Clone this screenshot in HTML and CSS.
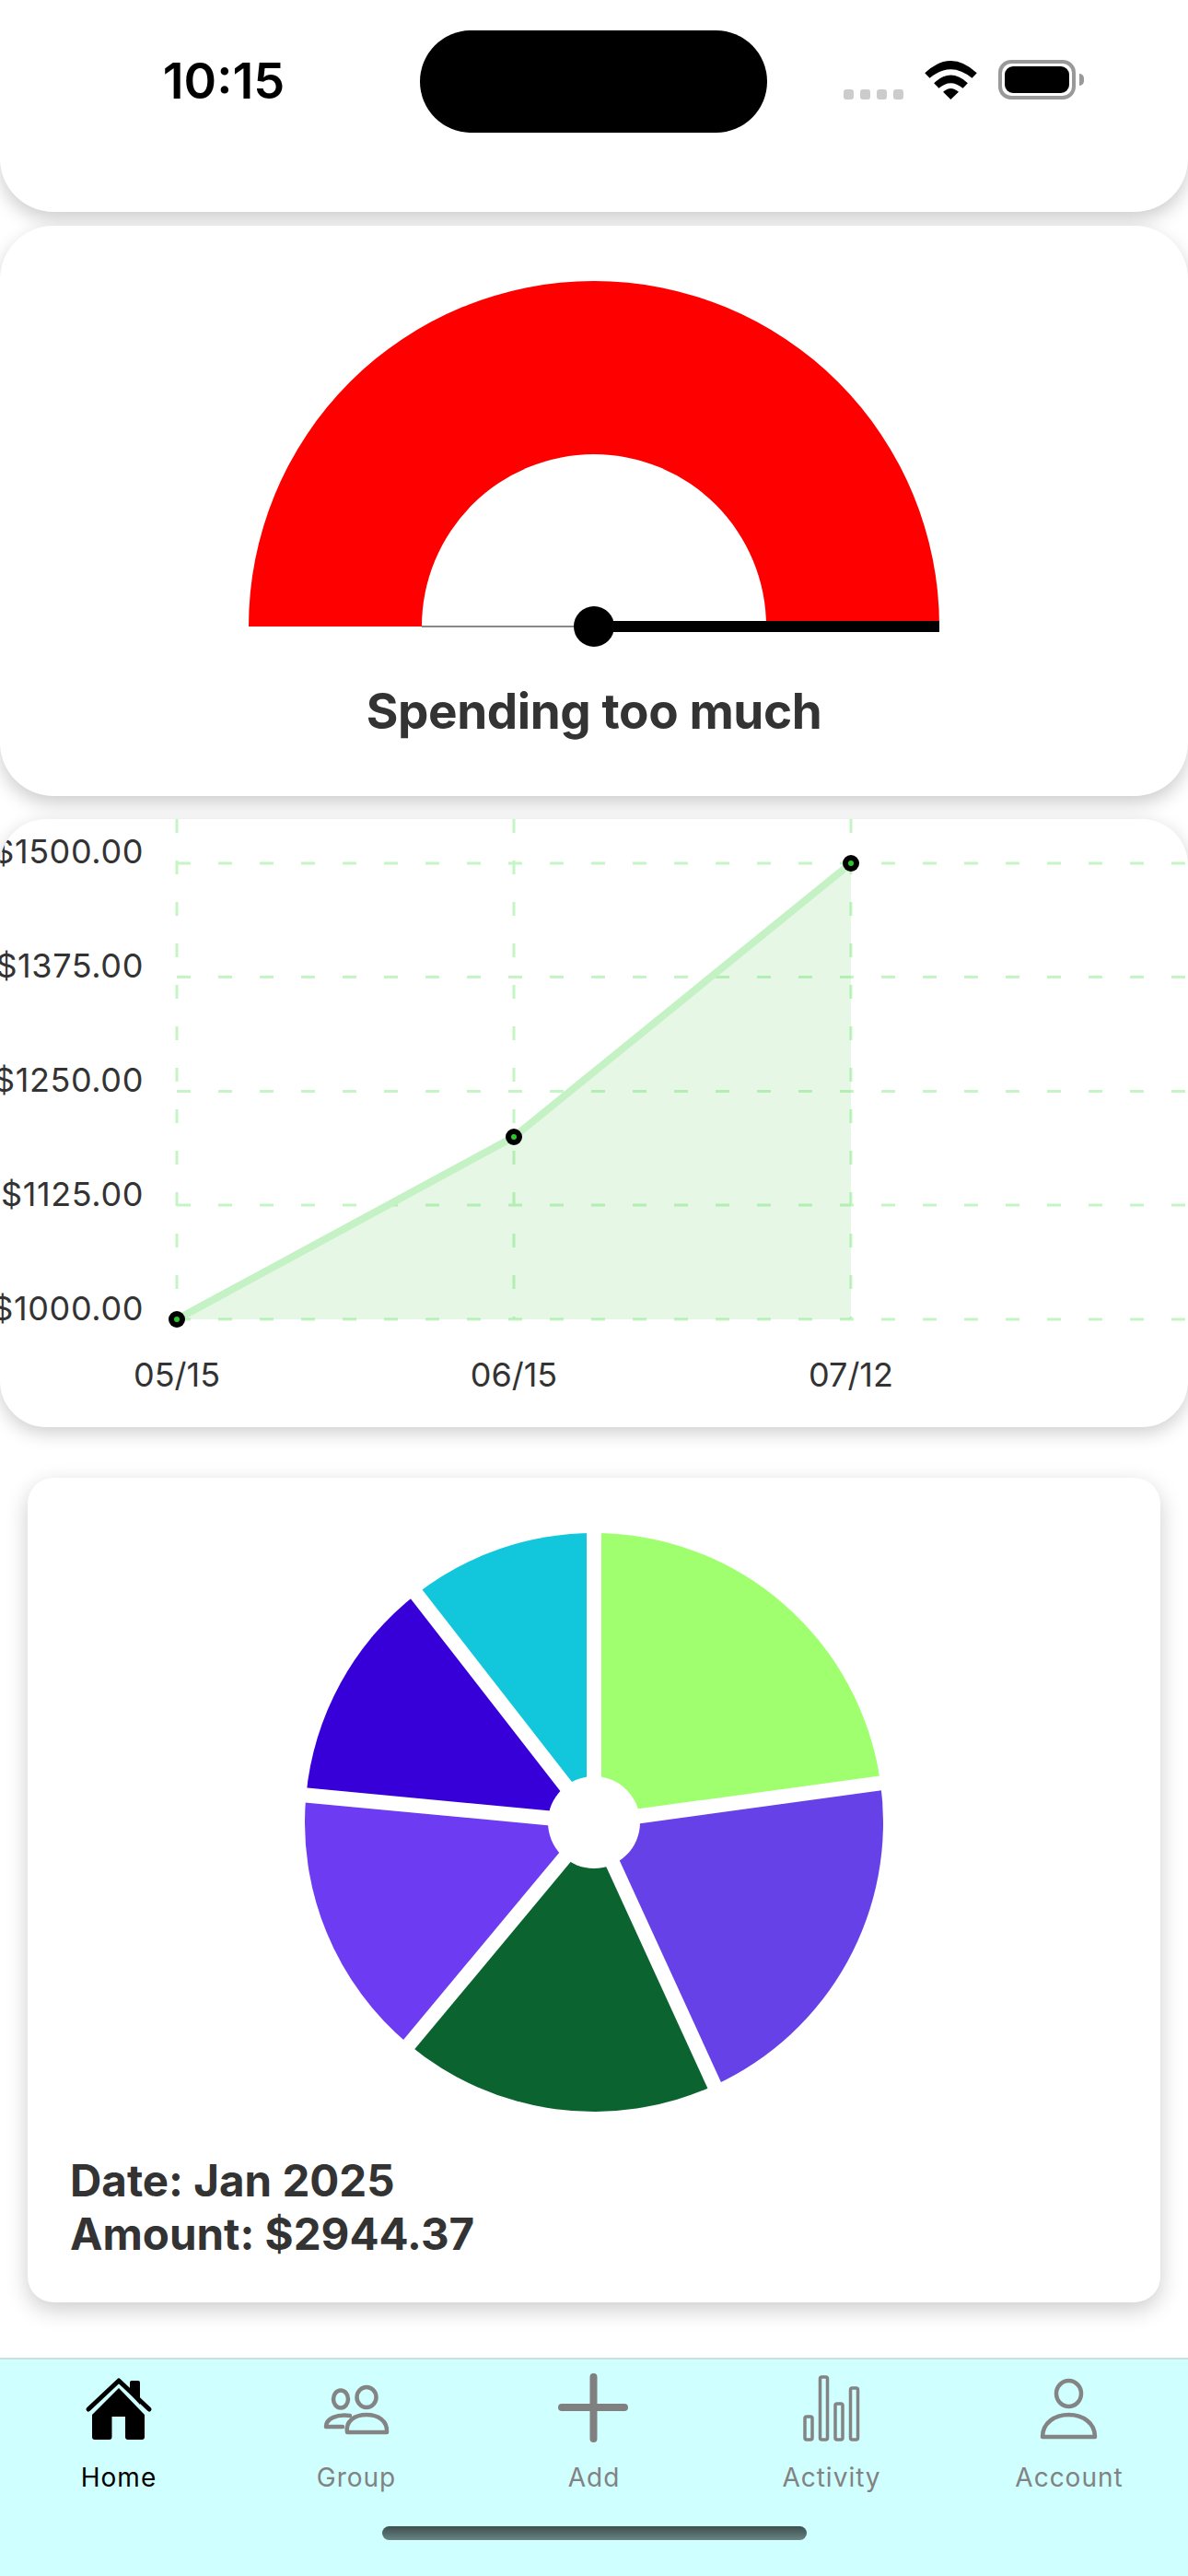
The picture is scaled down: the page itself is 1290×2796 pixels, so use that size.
FILE: index.html
```html
<!DOCTYPE html>
<html lang="en">
<head>
<meta charset="utf-8">
<title>Spending overview</title>
<link rel="stylesheet" href="styles.css">
</head>
<body>
<div class="page">
  <header class="top-card">
    <div class="status-bar">
      <div class="time">10:15</div>
      <div class="island"></div>
      <div class="status-icons">
        <div class="signal"><i></i><i></i><i></i><i></i></div>
        <svg class="wifi" viewBox="372 105 171 127" width="57" height="42">
          <path d="M372 145Q457 65 543 145L527 162Q457 104 388 162Z"/>
          <path d="M402 178Q457 126 513 178L497 195Q457 161 418 195Z"/>
          <path d="M432 207Q457 184 483 207L457 232Z"/>
        </svg>
        <div class="battery"><div class="battery-fill"></div></div>
        <div class="battery-cap"></div>
      </div>
    </div>
  </header>

  <section class="gauge-card">
    <svg class="gauge" viewBox="270 305 750 400" width="750" height="400">
      <path class="gauge-arc" d="M270 680A375 375 0 0 1 1020 680H832A187 187 0 0 0 458 680Z"/>
      <line class="gauge-track" x1="458" y1="680" x2="645" y2="680"/>
      <line class="gauge-needle" x1="645" y1="680" x2="1020" y2="680"/>
      <circle class="gauge-hub" cx="645" cy="680" r="22"/>
    </svg>
    <h2 class="gauge-title">Spending too much</h2>
  </section>

  <section class="chart-card">
    <svg class="chart" viewBox="0 889 1290 660" width="1290" height="660">
      <g class="grid">
        <line x1="192" y1="889" x2="192" y2="1432"/>
        <line x1="558" y1="889" x2="558" y2="1432"/>
        <line x1="924" y1="889" x2="924" y2="1432"/>
        <line x1="192" y1="937" x2="1290" y2="937"/>
        <line x1="192" y1="1060.5" x2="1290" y2="1060.5"/>
        <line x1="192" y1="1184.5" x2="1290" y2="1184.5"/>
        <line x1="192" y1="1308" x2="1290" y2="1308"/>
        <line x1="192" y1="1432" x2="1290" y2="1432"/>
      </g>
      <polygon class="area" points="192,1432 558,1234 924,937 924,1432"/>
      <polyline class="trend" points="192,1432 558,1234 924,937"/>
      <g class="point">
        <circle class="point-ring" cx="192" cy="1432" r="9"/><circle class="point-core" cx="192" cy="1432" r="3"/>
        <circle class="point-ring" cx="558" cy="1234" r="9"/><circle class="point-core" cx="558" cy="1234" r="3"/>
        <circle class="point-ring" cx="924" cy="937" r="9"/><circle class="point-core" cx="924" cy="937" r="3"/>
      </g>
      <g class="y-labels">
        <text x="156" y="937">$1500.00</text>
        <text x="156" y="1061">$1375.00</text>
        <text x="156" y="1185">$1250.00</text>
        <text x="156" y="1309">$1125.00</text>
        <text x="156" y="1433">$1000.00</text>
      </g>
      <g class="x-labels">
        <text x="192" y="1505">05/15</text>
        <text x="558" y="1505">06/15</text>
        <text x="924" y="1505">07/12</text>
      </g>
    </svg>
  </section>

  <section class="pie-card">
    <svg class="pie" viewBox="331 1664 628 628" width="628" height="628">
      <path class="s1" d="M645 1978V1664A314 314 0 0 1 956.1 1935.4Z"/>
      <path class="s2" d="M645 1978L956.1 1935.4A314 314 0 0 1 775.7 2263.5Z"/>
      <path class="s3" d="M645 1978L775.7 2263.5A314 314 0 0 1 444 2219.2Z"/>
      <path class="s4" d="M645 1978L444 2219.2A314 314 0 0 1 332.4 1948.4Z"/>
      <path class="s5" d="M645 1978L332.4 1948.4A314 314 0 0 1 452.1 1730.2Z"/>
      <path class="s6" d="M645 1978L452.1 1730.2A314 314 0 0 1 645 1664Z"/>
      <g class="pie-gaps">
        <line x1="645" y1="1978" x2="645" y2="1648"/>
        <line x1="645" y1="1978" x2="972" y2="1933.2"/>
        <line x1="645" y1="1978" x2="782.4" y2="2278"/>
        <line x1="645" y1="1978" x2="433.8" y2="2231.5"/>
        <line x1="645" y1="1978" x2="316.5" y2="1947"/>
        <line x1="645" y1="1978" x2="442.3" y2="1717.6"/>
      </g>
      <circle class="pie-hole" cx="645" cy="1978" r="50"/>
    </svg>
    <div class="pie-info">
      <div>Date: Jan 2025</div>
      <div>Amount: $2944.37</div>
    </div>
  </section>

  <nav class="tabbar">
    <div class="tabs">
      <div class="tab tab-active">
        <svg class="tab-icon" viewBox="89 2574 80 80" width="80" height="80">
          <path class="home-fill" d="M141 2598V2586a2 2 0 0 1 2-2h7a2 2 0 0 1 2 2v24Z"/>
          <path class="home-roof" d="M96 2615L129 2584L162 2615"/>
          <path class="home-fill" d="M129 2592L157 2621V2645a3 3 0 0 1-3 3H139a3 3 0 0 1-3-3V2623H121.500V2645a3 3 0 0 1-3 3H103a3 3 0 0 1-3-3V2621Z"/>
        </svg>
        <span class="tab-label">Home</span>
      </div>
      <div class="tab">
        <svg class="tab-icon" viewBox="347 2574 80 80" width="80" height="80">
          <ellipse class="icon-line" cx="398" cy="2602" rx="10.500" ry="11"/>
          <ellipse class="icon-line" cx="370" cy="2604" rx="8" ry="9.500"/>
          <path class="icon-line" d="M377 2640C375 2628 385 2621 398 2621C411 2621 421 2628 420 2640Z"/>
          <path class="icon-line" d="M380 2622C366 2620 354 2625 354 2634H372"/>
        </svg>
        <span class="tab-label">Group</span>
      </div>
      <div class="tab">
        <svg class="tab-icon" viewBox="605 2574 80 80" width="80" height="80">
          <path class="icon-plus" d="M644.500 2580V2647M610 2613H678"/>
        </svg>
        <span class="tab-label">Add</span>
      </div>
      <div class="tab">
        <svg class="tab-icon" viewBox="863 2574 80 80" width="80" height="80">
          <rect class="icon-bar" x="874" y="2623" width="8" height="25" rx="2"/>
          <rect class="icon-bar" x="890.500" y="2580" width="8" height="68" rx="2"/>
          <rect class="icon-bar" x="907" y="2609" width="8" height="39" rx="2"/>
          <rect class="icon-bar" x="923.500" y="2592" width="8" height="56" rx="2"/>
        </svg>
        <span class="tab-label">Activity</span>
      </div>
      <div class="tab">
        <svg class="tab-icon" viewBox="1121 2574 80 80" width="80" height="80">
          <ellipse class="icon-line" cx="1160.500" cy="2598" rx="13.500" ry="14"/>
          <path class="icon-line" d="M1132 2645C1132 2630 1145 2621 1160.500 2621C1176 2621 1189 2630 1189 2645Z"/>
        </svg>
        <span class="tab-label">Account</span>
      </div>
    </div>
    <div class="home-indicator"></div>
  </nav>
</div>
</body>
</html>
```
FILE: styles.css
```css
* { box-sizing: border-box; }
html, body { margin: 0; padding: 0; background: #fff; }
body { font-family: Inter, "Liberation Sans", sans-serif; color: #333; }
svg { display: block; }

.page {
  width: 1290px;
  height: 2796px;
  display: flex;
  flex-direction: column;
  overflow: hidden;
}

/* top card + status bar */
.top-card {
  height: 230px;
  background: #fff;
  border-radius: 0 0 58px 58px;
  box-shadow: 0 8px 20px rgba(0, 0, 0, .2);
  padding-top: 33px;
}
.status-bar { display: flex; align-items: flex-start; }
.time {
  width: 456px;
  padding-left: 30px;
  padding-top: 27px;
  text-align: center;
  font-size: 54px;
  line-height: 56px;
  font-weight: 600;
  color: #000;
}
.island { width: 377px; height: 111px; background: #000; border-radius: 56px; }
.status-icons { display: flex; align-items: flex-end; margin-left: 83px; padding-top: 32px; }
.signal { display: flex; gap: 7px; margin-right: 23px; }
.signal i { width: 11px; height: 11px; border-radius: 3px; background: #ccc; }
.wifi { fill: #000; margin-right: 23px; }
.battery {
  width: 84px;
  height: 43px;
  border: 4px solid #999;
  border-radius: 14px;
  padding: 3px;
}
.battery-fill { width: 100%; height: 100%; background: #000; border-radius: 9px; }
.battery-cap {
  width: 5px;
  height: 13px;
  margin: 0 0 15px 4px;
  background: #999;
  border-radius: 0 5px 5px 0;
}

/* gauge */
.gauge-card {
  margin-top: 15px;
  height: 619px;
  background: #fff;
  border-radius: 58px;
  box-shadow: 0 8px 20px rgba(0, 0, 0, .2);
  padding-top: 60px;
  display: flex;
  flex-direction: column;
  align-items: center;
}
.gauge-arc { fill: #f00; }
.gauge-track { stroke: #888; stroke-width: 2; }
.gauge-needle { stroke: #000; stroke-width: 12; }
.gauge-hub { fill: #000; }
.gauge-title {
  margin: 34px 0 0;
  font-size: 53px;
  line-height: 66px;
  font-weight: 700;
  letter-spacing: -.4px;
  color: #333;
}

/* line chart */
.chart-card {
  margin-top: 25px;
  height: 660px;
  background: #fff;
  border-radius: 50px;
  box-shadow: 0 6px 20px rgba(0, 0, 0, .2);
}
.chart { border-radius: 50px; }
.grid line { stroke: #c5f5c5; stroke-width: 3; stroke-dasharray: 15 30; }
.area { fill: #3cc43c; fill-opacity: .13; }
.trend { fill: none; stroke: #c5f2c5; stroke-width: 8; }
.point-ring { fill: #000; }
.point-core { fill: #2bc82b; }
.y-labels text { font-size: 36px; letter-spacing: .6px; fill: #333; text-anchor: end; }
.x-labels text { font-size: 36px; fill: #333; text-anchor: middle; }

/* pie */
.pie-card {
  margin: 55px 30px 0;
  height: 895px;
  background: #fff;
  border-radius: 28px;
  box-shadow: 0 8px 24px rgba(0, 0, 0, .2);
  padding-top: 60px;
}
.pie { margin: 0 auto; }
.s1 { fill: #a0ff6e; }
.s2 { fill: #6741e8; }
.s3 { fill: #0b6330; }
.s4 { fill: #6c3bf2; }
.s5 { fill: #3700d9; }
.s6 { fill: #12c6dc; }
.pie-gaps line { stroke: #fff; stroke-width: 16; }
.pie-hole { fill: #fff; }
.pie-info {
  margin: 46px 0 0 46px;
  font-size: 47.500px;
  line-height: 58px;
  font-weight: 700;
  color: #333;
}

/* tab bar */
.tabbar {
  margin-top: auto;
  height: 237px;
  background: #cfffff;
  border-top: 2px solid #ccdede;
  display: flex;
  flex-direction: column;
  align-items: center;
}
.tabs { display: flex; width: 100%; padding-top: 13px; }
.tab {
  flex: 1;
  display: flex;
  flex-direction: column;
  align-items: center;
  color: #828282;
}
.tab-active { color: #000; }
.tab-label { margin-top: 18px; font-size: 28px; line-height: 34px; letter-spacing: 1px; }
.home-fill { fill: #000; }
.home-roof { fill: none; stroke: #000; stroke-width: 5; stroke-linecap: round; stroke-linejoin: round; }
.icon-line { fill: none; stroke: #848484; stroke-width: 4.500; stroke-linecap: round; stroke-linejoin: round; }
.icon-plus { fill: none; stroke: #808080; stroke-width: 8; stroke-linecap: round; }
.icon-bar { fill: none; stroke: #848484; stroke-width: 3.500; }
.home-indicator {
  width: 461px;
  height: 15px;
  margin-top: 36px;
  border-radius: 8px;
  background: linear-gradient(#3c4f4f, #6a8383);
}
```
